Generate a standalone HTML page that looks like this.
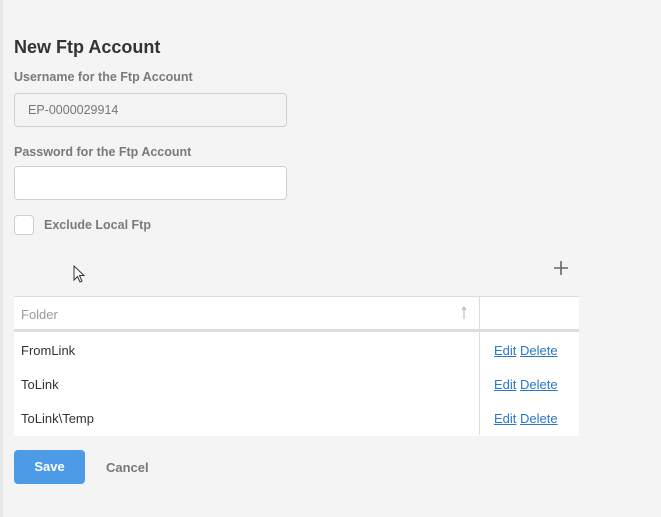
<!DOCTYPE html>
<html><head><style>
body{margin:0;width:661px;height:517px;background:#f4f4f4;font-family:"Liberation Sans",sans-serif;position:relative;overflow:hidden}
.a{position:absolute}
.strip{left:0;top:0;width:3px;height:517px;background:#e8e8e8}
h1{position:absolute;left:14px;top:37px;margin:0;font-size:18px;font-weight:bold;color:#333}
.lbl{font-size:12.5px;font-weight:bold;color:#7a7a7a}
.inp{left:14px;width:271px;height:32px;border:1px solid #cfcfcf;border-radius:4px;background:#fff}
.row{left:21px;font-size:13px;color:#333}
.lk{left:494px;font-size:13px;color:#2a78c6}
.lk span{text-decoration:underline}
</style></head><body>
<div class="a strip"></div>
<h1>New Ftp Account</h1>
<div class="a lbl" style="left:14px;top:70px">Username for the Ftp Account</div>
<div class="a inp" style="top:93px;background:#f3f3f3"></div>
<div class="a" style="left:28px;top:103px;font-size:12.5px;color:#777">EP-0000029914</div>
<div class="a lbl" style="left:14px;top:145px">Password for the Ftp Account</div>
<div class="a inp" style="top:166px"></div>
<div class="a" style="left:14px;top:215px;width:18px;height:18px;border:1px solid #cfcfcf;border-radius:4px;background:#fff"></div>
<div class="a lbl" style="left:44px;top:218px">Exclude Local Ftp</div>
<svg class="a" style="left:73px;top:265px" width="14" height="20" viewBox="0 0 14 20"><path d="M1 1 L1 15 L4.5 11.5 L7 17 L9 16 L6.5 10.5 L11 10.5 Z" fill="#fff" stroke="#333" stroke-width="1"/></svg>
<svg class="a" style="left:553px;top:260px" width="16" height="16"><path d="M8 1V15M1 8H15" stroke="#666" stroke-width="1.6"/></svg>
<div class="a" style="left:14px;top:296px;width:565px;height:139px;background:#fff;border-top:1px solid #ddd"></div>
<div class="a" style="left:14px;top:329px;width:565px;height:3px;background:#ddd"></div>
<div class="a" style="left:479px;top:297px;width:1px;height:138px;background:#ddd"></div>
<div class="a" style="left:21px;top:307px;font-size:13px;color:#999">Folder</div>
<svg class="a" style="left:460px;top:306px" width="8" height="14"><path d="M4 1V13M2 4L4 1L6 4" stroke="#a9b4bf" stroke-width="1" fill="none"/></svg>
<div class="a row" style="top:343px">FromLink</div>
<div class="a row" style="top:377px">ToLink</div>
<div class="a row" style="top:411px">ToLink\Temp</div>
<div class="a lk" style="top:343px"><span>Edit</span> <span>Delete</span></div>
<div class="a lk" style="top:377px"><span>Edit</span> <span>Delete</span></div>
<div class="a lk" style="top:411px"><span>Edit</span> <span>Delete</span></div>
<div class="a" style="left:14px;top:450px;width:71px;height:34px;border-radius:4px;background:#4d9be6;color:#fff;font-size:13px;font-weight:bold;text-align:center;line-height:34px">Save</div>
<div class="a" style="left:106px;top:460px;font-size:13px;font-weight:bold;color:#777">Cancel</div>
</body></html>
